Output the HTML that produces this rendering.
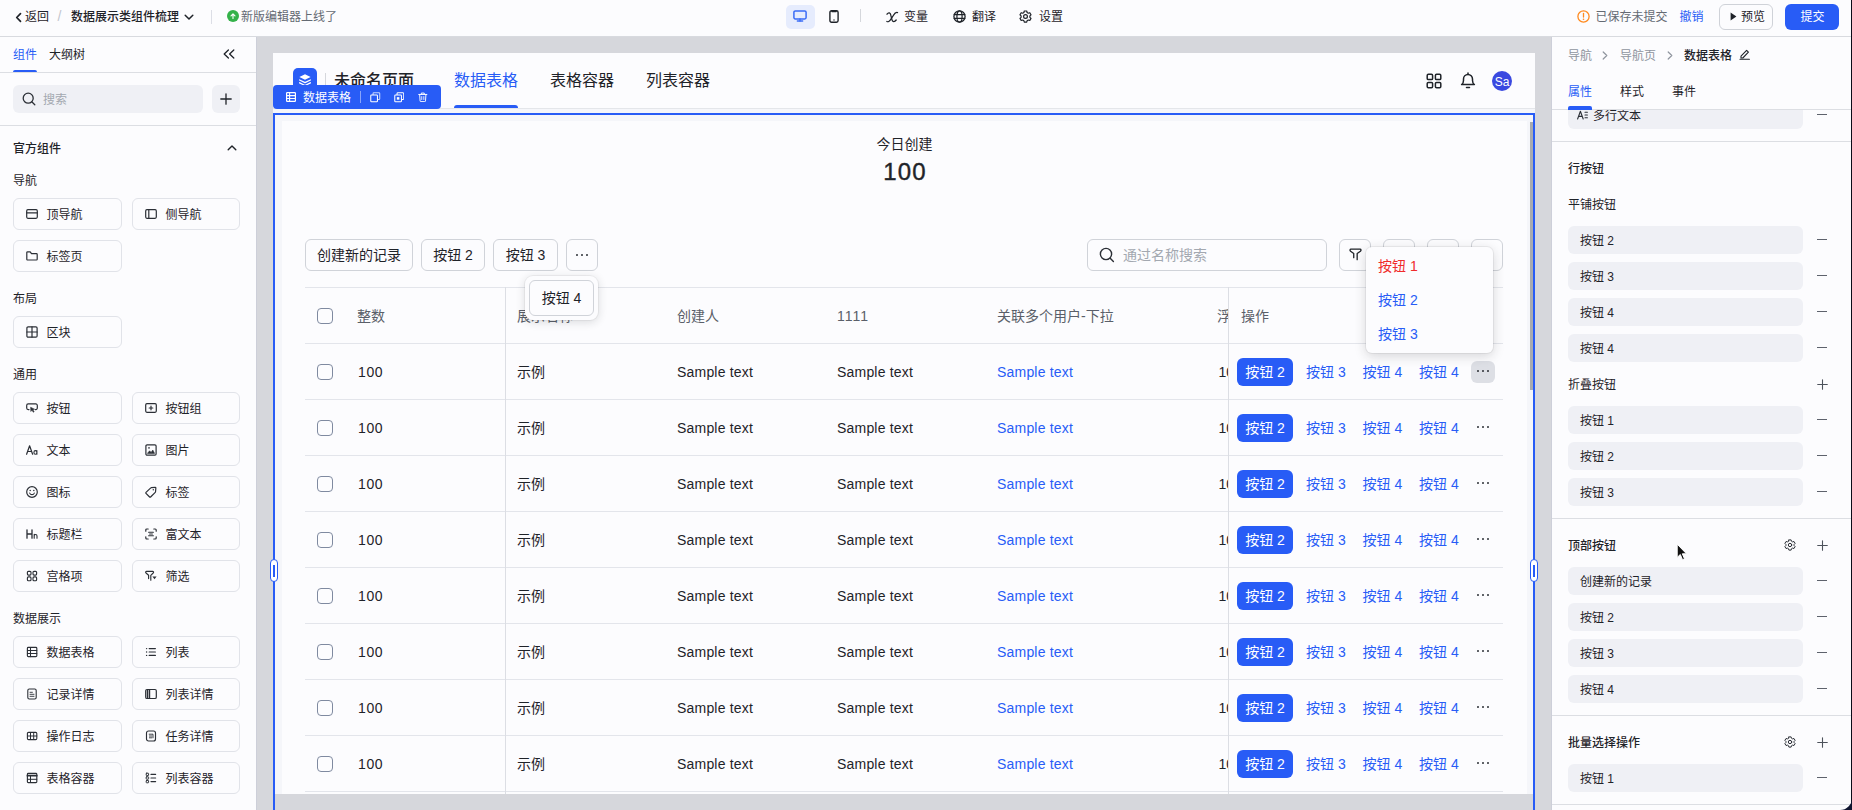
<!DOCTYPE html>
<html lang="zh-CN"><head><meta charset="utf-8"><title>数据展示类组件梳理</title>
<style>
html,body{margin:0;padding:0;}
body{width:1852px;height:810px;position:relative;overflow:hidden;background:#fcfcfe;
 font-family:"Liberation Sans","Noto Sans CJK SC",sans-serif;}
.r{position:absolute;box-sizing:border-box;display:block;}
.t{position:absolute;white-space:nowrap;display:block;}
</style></head><body>

<main>
<div class="r" style="left:256px;top:37px;width:1296px;height:773px;background:#d6d7dc;"></div>
<div class="r" style="left:273px;top:53px;width:1262px;height:741px;background:#f5f6fa;"></div>
<div class="r" style="left:273px;top:53px;width:1262px;height:56px;background:#fcfcfe;"></div>
<div class="r" style="left:273px;top:108px;width:1262px;height:1px;background:#e4e6ea;"></div>
<div class="r" style="left:281.5px;top:121px;width:1245.5px;height:673px;background:#fcfcfe;"></div>
<div class="r" style="left:293px;top:68px;width:24px;height:24px;background:#285cf6;border-radius:5px;"></div>
<svg class="r" style="left:298px;top:73px;" width="14" height="14" viewBox="0 0 14 14" fill="none"><path d="M7 1.2L12.6 4 7 6.8 1.4 4z" fill="#fff"/><path d="M1.6 7l5.4 2.7L12.4 7M1.6 9.8l5.4 2.7 5.4-2.7" stroke="#fff" stroke-width="1.3" stroke-linecap="round" stroke-linejoin="round"/></svg>
<div class="r" style="left:325px;top:73px;width:1px;height:14px;background:#d5d7dc;"></div>
<span class="t" style="left:334px;top:69.0px;font-size:16px;line-height:24px;height:24px;color:#1f2329;font-weight:500;">未命名页面</span>
<span class="t" style="left:454px;top:69.0px;font-size:16px;line-height:24px;height:24px;color:#285cf6;">数据表格</span>
<span class="t" style="left:550px;top:69.0px;font-size:16px;line-height:24px;height:24px;color:#1f2329;">表格容器</span>
<span class="t" style="left:646px;top:69.0px;font-size:16px;line-height:24px;height:24px;color:#1f2329;">列表容器</span>
<div class="r" style="left:454px;top:105px;width:64px;height:3px;background:#285cf6;border-radius:3px 3px 0 0;"></div>
<svg class="r" style="left:1426px;top:73px;" width="16" height="16" viewBox="0 0 16 16" fill="none"><rect x="1.2" y="1.2" width="5.4" height="5.4" rx="1.2" stroke="#1f2329" stroke-width="1.5" stroke-linecap="round" stroke-linejoin="round"/><rect x="9.4" y="1.2" width="5.4" height="5.4" rx="1.2" stroke="#1f2329" stroke-width="1.5" stroke-linecap="round" stroke-linejoin="round"/><rect x="1.2" y="9.4" width="5.4" height="5.4" rx="1.2" stroke="#1f2329" stroke-width="1.5" stroke-linecap="round" stroke-linejoin="round"/><rect x="9.4" y="9.4" width="5.4" height="5.4" rx="1.2" stroke="#1f2329" stroke-width="1.5" stroke-linecap="round" stroke-linejoin="round"/></svg>
<svg class="r" style="left:1460px;top:71.5px;" width="16" height="17" viewBox="0 0 16 17" fill="none"><path d="M1.6 12.6h12.8c-1.3-1-1.9-2.3-1.9-4.2V6.9a4.5 4.5 0 0 0-9 0v1.5c0 1.9-.6 3.2-1.9 4.2z" stroke="#1f2329" stroke-width="1.5" stroke-linecap="round" stroke-linejoin="round"/><path d="M8 1.1v1.2" stroke="#1f2329" stroke-width="1.5" stroke-linecap="round" stroke-linejoin="round"/><path d="M6.5 15.4h3" stroke="#1f2329" stroke-width="1.5" stroke-linecap="round" stroke-linejoin="round"/></svg>
<div class="r" style="left:1492px;top:71px;width:20px;height:20px;background:#3a49e0;border-radius:10px;"></div>
<span class="t" style="left:1502px;top:72.0px;font-size:12px;line-height:20px;height:20px;color:#fff;transform:translateX(-50%);">Sa</span>
<span class="t" style="left:904.5px;top:133.0px;font-size:14px;line-height:22px;height:22px;color:#1f2329;transform:translateX(-50%);">今日创建</span>
<span class="t" style="left:905px;top:157.0px;font-size:24px;line-height:30px;height:30px;color:#1f2329;transform:translateX(-50%);letter-spacing:1.2px;-webkit-text-stroke:0.4px #1f2329;">100</span>
<div class="r" style="left:305px;top:239px;width:108px;height:32px;background:#fcfcfe;border:1px solid #d0d3d9;border-radius:6px;"></div>
<span class="t" style="left:359.0px;top:244.0px;font-size:14px;line-height:22px;height:22px;color:#1f2329;transform:translateX(-50%);">创建新的记录</span>
<div class="r" style="left:421px;top:239px;width:64px;height:32px;background:#fcfcfe;border:1px solid #d0d3d9;border-radius:6px;"></div>
<span class="t" style="left:453.0px;top:244.0px;font-size:14px;line-height:22px;height:22px;color:#1f2329;transform:translateX(-50%);">按钮 2</span>
<div class="r" style="left:493px;top:239px;width:65px;height:32px;background:#fcfcfe;border:1px solid #d0d3d9;border-radius:6px;"></div>
<span class="t" style="left:525.5px;top:244.0px;font-size:14px;line-height:22px;height:22px;color:#1f2329;transform:translateX(-50%);">按钮 3</span>
<div class="r" style="left:566px;top:239px;width:32px;height:32px;background:#fcfcfe;border:1px solid #d0d3d9;border-radius:6px;"></div>
<svg class="r" style="left:575px;top:253px;" width="14" height="4" viewBox="0 0 14 4" fill="none"><circle cx="2" cy="2" r="0.95" fill="#1f2329"/><circle cx="7" cy="2" r="0.95" fill="#1f2329"/><circle cx="12" cy="2" r="0.95" fill="#1f2329"/></svg>
<div class="r" style="left:1087px;top:239px;width:240px;height:32px;background:#fcfcfe;border:1px solid #d0d3d9;border-radius:6px;"></div>
<svg class="r" style="left:1099px;top:247px;" width="16" height="16" viewBox="0 0 16 16" fill="none"><circle cx="7" cy="7" r="5.6" stroke="#2b2f36" stroke-width="1.4" stroke-linecap="round" stroke-linejoin="round"/><path d="M11.2 11.2l3.2 3.2" stroke="#2b2f36" stroke-width="1.4" stroke-linecap="round" stroke-linejoin="round"/></svg>
<span class="t" style="left:1123px;top:244.0px;font-size:14px;line-height:22px;height:22px;color:#a3a8b0;">通过名称搜索</span>
<div class="r" style="left:1339px;top:239px;width:32px;height:32px;background:#fcfcfe;border:1px solid #d0d3d9;border-radius:6px;"></div>
<div class="r" style="left:1383px;top:239px;width:32px;height:32px;background:#fcfcfe;border:1px solid #d0d3d9;border-radius:6px;"></div>
<div class="r" style="left:1427px;top:239px;width:32px;height:32px;background:#fcfcfe;border:1px solid #d0d3d9;border-radius:6px;"></div>
<div class="r" style="left:1471px;top:239px;width:32px;height:32px;background:#fcfcfe;border:1px solid #d0d3d9;border-radius:6px;"></div>
<svg class="r" style="left:1348.6px;top:248.4px;" width="13" height="13" viewBox="0 0 14 14" fill="none"><path d="M5.1 10.4V6L1.7 3.5Q1 2.9 1.1 2.1Q1.3 1.3 2.1 1.3H11.9Q12.8 1.3 12.9 2.1Q13 2.9 12.3 3.5L8.8 6V12.6" stroke="#1f2329" stroke-width="1.4" stroke-linecap="round" stroke-linejoin="round"/></svg>
<div class="r" style="left:305px;top:287px;width:1198px;height:1px;background:#e3e5eb;"></div>
<div class="r" style="left:305px;top:343px;width:1198px;height:1px;background:#e3e5eb;"></div>
<div class="r" style="left:305px;top:399px;width:1198px;height:1px;background:#e3e5eb;"></div>
<div class="r" style="left:305px;top:455px;width:1198px;height:1px;background:#e3e5eb;"></div>
<div class="r" style="left:305px;top:511px;width:1198px;height:1px;background:#e3e5eb;"></div>
<div class="r" style="left:305px;top:567px;width:1198px;height:1px;background:#e3e5eb;"></div>
<div class="r" style="left:305px;top:623px;width:1198px;height:1px;background:#e3e5eb;"></div>
<div class="r" style="left:305px;top:679px;width:1198px;height:1px;background:#e3e5eb;"></div>
<div class="r" style="left:305px;top:735px;width:1198px;height:1px;background:#e3e5eb;"></div>
<div class="r" style="left:305px;top:791px;width:1198px;height:1px;background:#e3e5eb;"></div>
<div class="r" style="left:505px;top:287px;width:1px;height:507px;background:#dcdee4;"></div>
<div class="r" style="left:1228px;top:287px;width:1px;height:507px;background:#dcdee4;"></div>
<div class="r" style="left:317px;top:307.5px;width:16px;height:16px;background:#fcfcfe;border:1px solid #7f8aa0;border-radius:4px;"></div>
<span class="t" style="left:357px;top:304.5px;font-size:14px;line-height:22px;height:22px;color:#5a5f69;">整数</span>
<span class="t" style="left:517px;top:304.5px;font-size:14px;line-height:22px;height:22px;color:#5a5f69;">展示名称</span>
<span class="t" style="left:677px;top:304.5px;font-size:14px;line-height:22px;height:22px;color:#5a5f69;">创建人</span>
<span class="t" style="left:837px;top:304.5px;font-size:14px;line-height:22px;height:22px;color:#5a5f69;letter-spacing:1px;">1111</span>
<span class="t" style="left:997px;top:304.5px;font-size:14px;line-height:22px;height:22px;color:#5a5f69;">关联多个用户-下拉</span>
<span class="t" style="left:1241px;top:304.5px;font-size:14px;line-height:22px;height:22px;color:#5a5f69;">操作</span>
<div class="r" style="left:1217px;top:288px;width:11px;height:506px;overflow:hidden;">
<span class="t" style="left:0px;top:16.5px;font-size:14px;line-height:22px;height:22px;color:#5a5f69;">浮点数</span>
<span class="t" style="left:1.5px;top:72.5px;font-size:14px;line-height:22px;height:22px;color:#1f2329;">100.00</span>
<span class="t" style="left:1.5px;top:128.5px;font-size:14px;line-height:22px;height:22px;color:#1f2329;">100.00</span>
<span class="t" style="left:1.5px;top:184.5px;font-size:14px;line-height:22px;height:22px;color:#1f2329;">100.00</span>
<span class="t" style="left:1.5px;top:240.5px;font-size:14px;line-height:22px;height:22px;color:#1f2329;">100.00</span>
<span class="t" style="left:1.5px;top:296.5px;font-size:14px;line-height:22px;height:22px;color:#1f2329;">100.00</span>
<span class="t" style="left:1.5px;top:352.5px;font-size:14px;line-height:22px;height:22px;color:#1f2329;">100.00</span>
<span class="t" style="left:1.5px;top:408.5px;font-size:14px;line-height:22px;height:22px;color:#1f2329;">100.00</span>
<span class="t" style="left:1.5px;top:464.5px;font-size:14px;line-height:22px;height:22px;color:#1f2329;">100.00</span>
<span class="t" style="left:1.5px;top:520.5px;font-size:14px;line-height:22px;height:22px;color:#1f2329;">100.00</span>
</div>
<div class="r" style="left:317px;top:363.5px;width:16px;height:16px;background:#fcfcfe;border:1px solid #7f8aa0;border-radius:4px;"></div>
<span class="t" style="left:358px;top:360.5px;font-size:14px;line-height:22px;height:22px;color:#1f2329;letter-spacing:0.6px;">100</span>
<span class="t" style="left:517px;top:360.5px;font-size:14px;line-height:22px;height:22px;color:#1f2329;">示例</span>
<span class="t" style="left:677px;top:360.5px;font-size:14px;line-height:22px;height:22px;color:#1f2329;letter-spacing:.2px;">Sample text</span>
<span class="t" style="left:837px;top:360.5px;font-size:14px;line-height:22px;height:22px;color:#1f2329;letter-spacing:.2px;">Sample text</span>
<span class="t" style="left:997px;top:360.5px;font-size:14px;line-height:22px;height:22px;color:#285cf6;letter-spacing:.2px;">Sample text</span>
<div class="r" style="left:1237px;top:357.5px;width:56px;height:28px;background:#285cf6;border-radius:6px;"></div>
<span class="t" style="left:1265px;top:360.5px;font-size:14px;line-height:22px;height:22px;color:#fff;transform:translateX(-50%);">按钮 2</span>
<span class="t" style="left:1306px;top:360.5px;font-size:14px;line-height:22px;height:22px;color:#285cf6;">按钮 3</span>
<span class="t" style="left:1362.5px;top:360.5px;font-size:14px;line-height:22px;height:22px;color:#285cf6;">按钮 4</span>
<span class="t" style="left:1419px;top:360.5px;font-size:14px;line-height:22px;height:22px;color:#285cf6;">按钮 4</span>
<div class="r" style="left:1471px;top:361px;width:24px;height:22px;background:#dddfe5;border-radius:6px;"></div>
<svg class="r" style="left:1476px;top:369.0px;" width="14" height="4" viewBox="0 0 14 4" fill="none"><circle cx="2" cy="2" r="0.95" fill="#1f2329"/><circle cx="7" cy="2" r="0.95" fill="#1f2329"/><circle cx="12" cy="2" r="0.95" fill="#1f2329"/></svg>
<div class="r" style="left:317px;top:419.5px;width:16px;height:16px;background:#fcfcfe;border:1px solid #7f8aa0;border-radius:4px;"></div>
<span class="t" style="left:358px;top:416.5px;font-size:14px;line-height:22px;height:22px;color:#1f2329;letter-spacing:0.6px;">100</span>
<span class="t" style="left:517px;top:416.5px;font-size:14px;line-height:22px;height:22px;color:#1f2329;">示例</span>
<span class="t" style="left:677px;top:416.5px;font-size:14px;line-height:22px;height:22px;color:#1f2329;letter-spacing:.2px;">Sample text</span>
<span class="t" style="left:837px;top:416.5px;font-size:14px;line-height:22px;height:22px;color:#1f2329;letter-spacing:.2px;">Sample text</span>
<span class="t" style="left:997px;top:416.5px;font-size:14px;line-height:22px;height:22px;color:#285cf6;letter-spacing:.2px;">Sample text</span>
<div class="r" style="left:1237px;top:413.5px;width:56px;height:28px;background:#285cf6;border-radius:6px;"></div>
<span class="t" style="left:1265px;top:416.5px;font-size:14px;line-height:22px;height:22px;color:#fff;transform:translateX(-50%);">按钮 2</span>
<span class="t" style="left:1306px;top:416.5px;font-size:14px;line-height:22px;height:22px;color:#285cf6;">按钮 3</span>
<span class="t" style="left:1362.5px;top:416.5px;font-size:14px;line-height:22px;height:22px;color:#285cf6;">按钮 4</span>
<span class="t" style="left:1419px;top:416.5px;font-size:14px;line-height:22px;height:22px;color:#285cf6;">按钮 4</span>
<svg class="r" style="left:1476px;top:425.0px;" width="14" height="4" viewBox="0 0 14 4" fill="none"><circle cx="2" cy="2" r="0.95" fill="#1f2329"/><circle cx="7" cy="2" r="0.95" fill="#1f2329"/><circle cx="12" cy="2" r="0.95" fill="#1f2329"/></svg>
<div class="r" style="left:317px;top:475.5px;width:16px;height:16px;background:#fcfcfe;border:1px solid #7f8aa0;border-radius:4px;"></div>
<span class="t" style="left:358px;top:472.5px;font-size:14px;line-height:22px;height:22px;color:#1f2329;letter-spacing:0.6px;">100</span>
<span class="t" style="left:517px;top:472.5px;font-size:14px;line-height:22px;height:22px;color:#1f2329;">示例</span>
<span class="t" style="left:677px;top:472.5px;font-size:14px;line-height:22px;height:22px;color:#1f2329;letter-spacing:.2px;">Sample text</span>
<span class="t" style="left:837px;top:472.5px;font-size:14px;line-height:22px;height:22px;color:#1f2329;letter-spacing:.2px;">Sample text</span>
<span class="t" style="left:997px;top:472.5px;font-size:14px;line-height:22px;height:22px;color:#285cf6;letter-spacing:.2px;">Sample text</span>
<div class="r" style="left:1237px;top:469.5px;width:56px;height:28px;background:#285cf6;border-radius:6px;"></div>
<span class="t" style="left:1265px;top:472.5px;font-size:14px;line-height:22px;height:22px;color:#fff;transform:translateX(-50%);">按钮 2</span>
<span class="t" style="left:1306px;top:472.5px;font-size:14px;line-height:22px;height:22px;color:#285cf6;">按钮 3</span>
<span class="t" style="left:1362.5px;top:472.5px;font-size:14px;line-height:22px;height:22px;color:#285cf6;">按钮 4</span>
<span class="t" style="left:1419px;top:472.5px;font-size:14px;line-height:22px;height:22px;color:#285cf6;">按钮 4</span>
<svg class="r" style="left:1476px;top:481.0px;" width="14" height="4" viewBox="0 0 14 4" fill="none"><circle cx="2" cy="2" r="0.95" fill="#1f2329"/><circle cx="7" cy="2" r="0.95" fill="#1f2329"/><circle cx="12" cy="2" r="0.95" fill="#1f2329"/></svg>
<div class="r" style="left:317px;top:531.5px;width:16px;height:16px;background:#fcfcfe;border:1px solid #7f8aa0;border-radius:4px;"></div>
<span class="t" style="left:358px;top:528.5px;font-size:14px;line-height:22px;height:22px;color:#1f2329;letter-spacing:0.6px;">100</span>
<span class="t" style="left:517px;top:528.5px;font-size:14px;line-height:22px;height:22px;color:#1f2329;">示例</span>
<span class="t" style="left:677px;top:528.5px;font-size:14px;line-height:22px;height:22px;color:#1f2329;letter-spacing:.2px;">Sample text</span>
<span class="t" style="left:837px;top:528.5px;font-size:14px;line-height:22px;height:22px;color:#1f2329;letter-spacing:.2px;">Sample text</span>
<span class="t" style="left:997px;top:528.5px;font-size:14px;line-height:22px;height:22px;color:#285cf6;letter-spacing:.2px;">Sample text</span>
<div class="r" style="left:1237px;top:525.5px;width:56px;height:28px;background:#285cf6;border-radius:6px;"></div>
<span class="t" style="left:1265px;top:528.5px;font-size:14px;line-height:22px;height:22px;color:#fff;transform:translateX(-50%);">按钮 2</span>
<span class="t" style="left:1306px;top:528.5px;font-size:14px;line-height:22px;height:22px;color:#285cf6;">按钮 3</span>
<span class="t" style="left:1362.5px;top:528.5px;font-size:14px;line-height:22px;height:22px;color:#285cf6;">按钮 4</span>
<span class="t" style="left:1419px;top:528.5px;font-size:14px;line-height:22px;height:22px;color:#285cf6;">按钮 4</span>
<svg class="r" style="left:1476px;top:537.0px;" width="14" height="4" viewBox="0 0 14 4" fill="none"><circle cx="2" cy="2" r="0.95" fill="#1f2329"/><circle cx="7" cy="2" r="0.95" fill="#1f2329"/><circle cx="12" cy="2" r="0.95" fill="#1f2329"/></svg>
<div class="r" style="left:317px;top:587.5px;width:16px;height:16px;background:#fcfcfe;border:1px solid #7f8aa0;border-radius:4px;"></div>
<span class="t" style="left:358px;top:584.5px;font-size:14px;line-height:22px;height:22px;color:#1f2329;letter-spacing:0.6px;">100</span>
<span class="t" style="left:517px;top:584.5px;font-size:14px;line-height:22px;height:22px;color:#1f2329;">示例</span>
<span class="t" style="left:677px;top:584.5px;font-size:14px;line-height:22px;height:22px;color:#1f2329;letter-spacing:.2px;">Sample text</span>
<span class="t" style="left:837px;top:584.5px;font-size:14px;line-height:22px;height:22px;color:#1f2329;letter-spacing:.2px;">Sample text</span>
<span class="t" style="left:997px;top:584.5px;font-size:14px;line-height:22px;height:22px;color:#285cf6;letter-spacing:.2px;">Sample text</span>
<div class="r" style="left:1237px;top:581.5px;width:56px;height:28px;background:#285cf6;border-radius:6px;"></div>
<span class="t" style="left:1265px;top:584.5px;font-size:14px;line-height:22px;height:22px;color:#fff;transform:translateX(-50%);">按钮 2</span>
<span class="t" style="left:1306px;top:584.5px;font-size:14px;line-height:22px;height:22px;color:#285cf6;">按钮 3</span>
<span class="t" style="left:1362.5px;top:584.5px;font-size:14px;line-height:22px;height:22px;color:#285cf6;">按钮 4</span>
<span class="t" style="left:1419px;top:584.5px;font-size:14px;line-height:22px;height:22px;color:#285cf6;">按钮 4</span>
<svg class="r" style="left:1476px;top:593.0px;" width="14" height="4" viewBox="0 0 14 4" fill="none"><circle cx="2" cy="2" r="0.95" fill="#1f2329"/><circle cx="7" cy="2" r="0.95" fill="#1f2329"/><circle cx="12" cy="2" r="0.95" fill="#1f2329"/></svg>
<div class="r" style="left:317px;top:643.5px;width:16px;height:16px;background:#fcfcfe;border:1px solid #7f8aa0;border-radius:4px;"></div>
<span class="t" style="left:358px;top:640.5px;font-size:14px;line-height:22px;height:22px;color:#1f2329;letter-spacing:0.6px;">100</span>
<span class="t" style="left:517px;top:640.5px;font-size:14px;line-height:22px;height:22px;color:#1f2329;">示例</span>
<span class="t" style="left:677px;top:640.5px;font-size:14px;line-height:22px;height:22px;color:#1f2329;letter-spacing:.2px;">Sample text</span>
<span class="t" style="left:837px;top:640.5px;font-size:14px;line-height:22px;height:22px;color:#1f2329;letter-spacing:.2px;">Sample text</span>
<span class="t" style="left:997px;top:640.5px;font-size:14px;line-height:22px;height:22px;color:#285cf6;letter-spacing:.2px;">Sample text</span>
<div class="r" style="left:1237px;top:637.5px;width:56px;height:28px;background:#285cf6;border-radius:6px;"></div>
<span class="t" style="left:1265px;top:640.5px;font-size:14px;line-height:22px;height:22px;color:#fff;transform:translateX(-50%);">按钮 2</span>
<span class="t" style="left:1306px;top:640.5px;font-size:14px;line-height:22px;height:22px;color:#285cf6;">按钮 3</span>
<span class="t" style="left:1362.5px;top:640.5px;font-size:14px;line-height:22px;height:22px;color:#285cf6;">按钮 4</span>
<span class="t" style="left:1419px;top:640.5px;font-size:14px;line-height:22px;height:22px;color:#285cf6;">按钮 4</span>
<svg class="r" style="left:1476px;top:649.0px;" width="14" height="4" viewBox="0 0 14 4" fill="none"><circle cx="2" cy="2" r="0.95" fill="#1f2329"/><circle cx="7" cy="2" r="0.95" fill="#1f2329"/><circle cx="12" cy="2" r="0.95" fill="#1f2329"/></svg>
<div class="r" style="left:317px;top:699.5px;width:16px;height:16px;background:#fcfcfe;border:1px solid #7f8aa0;border-radius:4px;"></div>
<span class="t" style="left:358px;top:696.5px;font-size:14px;line-height:22px;height:22px;color:#1f2329;letter-spacing:0.6px;">100</span>
<span class="t" style="left:517px;top:696.5px;font-size:14px;line-height:22px;height:22px;color:#1f2329;">示例</span>
<span class="t" style="left:677px;top:696.5px;font-size:14px;line-height:22px;height:22px;color:#1f2329;letter-spacing:.2px;">Sample text</span>
<span class="t" style="left:837px;top:696.5px;font-size:14px;line-height:22px;height:22px;color:#1f2329;letter-spacing:.2px;">Sample text</span>
<span class="t" style="left:997px;top:696.5px;font-size:14px;line-height:22px;height:22px;color:#285cf6;letter-spacing:.2px;">Sample text</span>
<div class="r" style="left:1237px;top:693.5px;width:56px;height:28px;background:#285cf6;border-radius:6px;"></div>
<span class="t" style="left:1265px;top:696.5px;font-size:14px;line-height:22px;height:22px;color:#fff;transform:translateX(-50%);">按钮 2</span>
<span class="t" style="left:1306px;top:696.5px;font-size:14px;line-height:22px;height:22px;color:#285cf6;">按钮 3</span>
<span class="t" style="left:1362.5px;top:696.5px;font-size:14px;line-height:22px;height:22px;color:#285cf6;">按钮 4</span>
<span class="t" style="left:1419px;top:696.5px;font-size:14px;line-height:22px;height:22px;color:#285cf6;">按钮 4</span>
<svg class="r" style="left:1476px;top:705.0px;" width="14" height="4" viewBox="0 0 14 4" fill="none"><circle cx="2" cy="2" r="0.95" fill="#1f2329"/><circle cx="7" cy="2" r="0.95" fill="#1f2329"/><circle cx="12" cy="2" r="0.95" fill="#1f2329"/></svg>
<div class="r" style="left:317px;top:755.5px;width:16px;height:16px;background:#fcfcfe;border:1px solid #7f8aa0;border-radius:4px;"></div>
<span class="t" style="left:358px;top:752.5px;font-size:14px;line-height:22px;height:22px;color:#1f2329;letter-spacing:0.6px;">100</span>
<span class="t" style="left:517px;top:752.5px;font-size:14px;line-height:22px;height:22px;color:#1f2329;">示例</span>
<span class="t" style="left:677px;top:752.5px;font-size:14px;line-height:22px;height:22px;color:#1f2329;letter-spacing:.2px;">Sample text</span>
<span class="t" style="left:837px;top:752.5px;font-size:14px;line-height:22px;height:22px;color:#1f2329;letter-spacing:.2px;">Sample text</span>
<span class="t" style="left:997px;top:752.5px;font-size:14px;line-height:22px;height:22px;color:#285cf6;letter-spacing:.2px;">Sample text</span>
<div class="r" style="left:1237px;top:749.5px;width:56px;height:28px;background:#285cf6;border-radius:6px;"></div>
<span class="t" style="left:1265px;top:752.5px;font-size:14px;line-height:22px;height:22px;color:#fff;transform:translateX(-50%);">按钮 2</span>
<span class="t" style="left:1306px;top:752.5px;font-size:14px;line-height:22px;height:22px;color:#285cf6;">按钮 3</span>
<span class="t" style="left:1362.5px;top:752.5px;font-size:14px;line-height:22px;height:22px;color:#285cf6;">按钮 4</span>
<span class="t" style="left:1419px;top:752.5px;font-size:14px;line-height:22px;height:22px;color:#285cf6;">按钮 4</span>
<svg class="r" style="left:1476px;top:761.0px;" width="14" height="4" viewBox="0 0 14 4" fill="none"><circle cx="2" cy="2" r="0.95" fill="#1f2329"/><circle cx="7" cy="2" r="0.95" fill="#1f2329"/><circle cx="12" cy="2" r="0.95" fill="#1f2329"/></svg>
<div class="r" style="left:256px;top:794px;width:1296px;height:16px;background:#d6d7dc;"></div>
<div class="r" style="left:525px;top:276px;width:73px;height:44px;background:#fcfcfe;border-radius:8px;box-shadow:0 2px 10px rgba(31,35,41,.16),0 0 0 1px rgba(31,35,41,.05);"></div>
<div class="r" style="left:529px;top:280px;width:65px;height:36px;background:#fcfcfe;border:1px solid #d0d3d9;border-radius:6px;"></div>
<span class="t" style="left:561.5px;top:287.0px;font-size:14px;line-height:22px;height:22px;color:#1f2329;transform:translateX(-50%);">按钮 4</span>
<div class="r" style="left:1366px;top:247px;width:127px;height:106px;background:#fcfcfe;border-radius:6px;box-shadow:0 3px 12px rgba(31,35,41,.18),0 0 0 1px rgba(31,35,41,.06);"></div>
<span class="t" style="left:1378px;top:255.0px;font-size:14px;line-height:22px;height:22px;color:#f02b2b;">按钮 1</span>
<span class="t" style="left:1378px;top:289.0px;font-size:14px;line-height:22px;height:22px;color:#285cf6;">按钮 2</span>
<span class="t" style="left:1378px;top:323.0px;font-size:14px;line-height:22px;height:22px;color:#285cf6;">按钮 3</span>
<div class="r" style="left:1530px;top:122px;width:3px;height:268px;background:#a9abb0;"></div>
<div class="r" style="left:273px;top:113px;width:1262px;height:720px;border:2px solid #285cf6;"></div>
<div class="r" style="left:273px;top:85px;width:168px;height:24px;background:#285cf6;border-radius:4px;"></div>
<svg class="r" style="left:285.5px;top:92px;" width="10" height="10" viewBox="0 0 10 10" fill="none"><rect x="0.6" y="0.6" width="8.8" height="8.8" rx="0.6" stroke="#fff" stroke-width="1.2"/><path d="M0.6 3.6H9.4M0.6 6.5H9.4M3.6 0.6V9.4" stroke="#fff" stroke-width="1.1"/></svg>
<span class="t" style="left:303px;top:88.0px;font-size:12px;line-height:20px;height:20px;color:#fff;">数据表格</span>
<div class="r" style="left:360px;top:91px;width:1px;height:12px;background:rgba(255,255,255,.45);"></div>
<svg class="r" style="left:370px;top:92px;" width="10.5" height="10.5" viewBox="0 0 11 11" fill="none"><path d="M3.2 3.2V1.6a0.8 0.8 0 0 1 .8-.8h5.4a0.8 0.8 0 0 1 .8.8V7a0.8 0.8 0 0 1-.8.8H7.8" stroke="#fff" stroke-width="1.1" opacity=".75"/><rect x="0.8" y="3.2" width="7" height="7" rx="0.8" stroke="#fff" stroke-width="1.1"/></svg>
<svg class="r" style="left:393.5px;top:92px;" width="10.5" height="10.5" viewBox="0 0 11 11" fill="none"><path d="M3.2 3.2V1.6a0.8 0.8 0 0 1 .8-.8h5.4a0.8 0.8 0 0 1 .8.8V7a0.8 0.8 0 0 1-.8.8H7.8" stroke="#fff" stroke-width="1.1"/><rect x="0.8" y="3.2" width="7" height="7" rx="0.8" stroke="#fff" stroke-width="1.1"/><rect x="3" y="5.4" width="2.6" height="2.6" fill="#fff"/></svg>
<svg class="r" style="left:418px;top:91.5px;" width="9.6" height="10.5" viewBox="0 0 11 12" fill="none"><path d="M0.8 2.8h9.4M3.8 2.6V1.2h3.4v1.4M1.9 2.8l.5 7.4a0.8 0.8 0 0 0 .8.8h4.6a0.8 0.8 0 0 0 .8-.8l.5-7.4" stroke="#fff" stroke-width="1.1" stroke-linecap="round" stroke-linejoin="round"/><path d="M4.3 5.2v3.4M6.7 5.2v3.4" stroke="#fff" stroke-width="1" stroke-linecap="round"/></svg>
<div class="r" style="left:270px;top:559px;width:8px;height:23px;background:#fff;border:1px solid #285cf6;border-radius:4px;"></div>
<div class="r" style="left:273.25px;top:565px;width:1.5px;height:12px;background:#285cf6;"></div>
<div class="r" style="left:1530px;top:559px;width:8px;height:23px;background:#fff;border:1px solid #285cf6;border-radius:4px;"></div>
<div class="r" style="left:1533.25px;top:565px;width:1.5px;height:12px;background:#285cf6;"></div>
</main>
<header>
<div class="r" style="left:0px;top:0px;width:1852px;height:36px;background:#fcfcfe;"></div>
<div class="r" style="left:0px;top:36px;width:1852px;height:1px;background:#d8dadf;"></div>
<svg class="r" style="left:15px;top:11.5px;" width="7" height="11" viewBox="0 0 7 11" fill="none"><path d="M5.5 1.6L1.7 5.5l3.8 3.9" stroke="#1f2329" stroke-width="1.7" stroke-linecap="round" stroke-linejoin="round"/></svg>
<span class="t" style="left:25px;top:7.0px;font-size:12px;line-height:20px;height:20px;color:#1f2329;">返回</span>
<span class="t" style="left:57.5px;top:4.5px;font-size:14px;line-height:22px;height:22px;color:#c3c6ce;">/</span>
<span class="t" style="left:71px;top:7.0px;font-size:12px;line-height:20px;height:20px;color:#1f2329;font-weight:500;">数据展示类组件梳理</span>
<svg class="r" style="left:184px;top:14px;" width="10" height="7" viewBox="0 0 10 7" fill="none"><path d="M1.2 1.2L5 5l3.8-3.8" stroke="#1f2329" stroke-width="1.5" stroke-linecap="round" stroke-linejoin="round"/></svg>
<div class="r" style="left:211px;top:10px;width:1px;height:14px;background:#dcdee6;"></div>
<div class="r" style="left:227px;top:10px;width:12px;height:12px;background:#34b24a;border-radius:6px;"></div>
<svg class="r" style="left:230px;top:13px;" width="6" height="6" viewBox="0 0 6 6" fill="none"><path d="M3 5.4V1M1 2.8L3 0.8l2 2" stroke="#fff" stroke-width="1.1" stroke-linecap="round" stroke-linejoin="round"/></svg>
<span class="t" style="left:241px;top:7.0px;font-size:12px;line-height:20px;height:20px;color:#646a73;">新版编辑器上线了</span>
<div class="r" style="left:786px;top:4.5px;width:29px;height:24px;background:#e6ecfd;border-radius:5px;"></div>
<svg class="r" style="left:793px;top:10px;" width="14" height="12" viewBox="0 0 14 12" fill="none"><rect x="0.9" y="0.9" width="12.2" height="8" rx="1.4" stroke="#3b6cf6" stroke-width="1.5" stroke-linecap="round" stroke-linejoin="round"/><path d="M4.4 11.1h5.2" stroke="#3b6cf6" stroke-width="1.5" stroke-linecap="round" stroke-linejoin="round"/><path d="M7 9v2" stroke="#3b6cf6" stroke-width="1.3" stroke-linecap="round" stroke-linejoin="round"/></svg>
<svg class="r" style="left:829px;top:9.5px;" width="10" height="13" viewBox="0 0 10 13" fill="none"><rect x="0.9" y="0.8" width="8.2" height="11.4" rx="1.6" stroke="#1f2329" stroke-width="1.4" stroke-linecap="round" stroke-linejoin="round"/><path d="M3 1.4h4" stroke="#1f2329" stroke-width="1.6" stroke-linecap="round" stroke-linejoin="round"/><circle cx="5" cy="10" r="0.7" fill="#1f2329"/></svg>
<div class="r" style="left:860px;top:9px;width:1px;height:13px;background:#d5d7dc;"></div>
<svg class="r" style="left:886px;top:10.5px;" width="13" height="12" viewBox="0 0 13 12" fill="none"><path d="M1 3.2C2.6 1 4.4 1.6 4.8 4.2L5.9 8.6C6.4 11 8.6 11.2 10.2 9" stroke="#1f2329" stroke-width="1.3" stroke-linecap="round" stroke-linejoin="round"/><path d="M11.6 1.6C10.2 1 9 1.6 7.4 4.4L4.6 8.6C3.4 10.6 2 11.2 0.9 10.4" stroke="#1f2329" stroke-width="1.2" stroke-linecap="round" stroke-linejoin="round"/></svg>
<span class="t" style="left:904px;top:7.0px;font-size:12px;line-height:20px;height:20px;color:#1f2329;">变量</span>
<svg class="r" style="left:952.5px;top:10px;" width="13" height="13" viewBox="0 0 13 13" fill="none"><circle cx="6.5" cy="6.5" r="5.6" stroke="#1f2329" stroke-width="1.3" stroke-linecap="round" stroke-linejoin="round"/><ellipse cx="6.5" cy="6.5" rx="2.6" ry="5.6" stroke="#1f2329" stroke-width="1.2" stroke-linecap="round" stroke-linejoin="round"/><path d="M1.2 4.6h10.6M1.2 8.4h10.6" stroke="#1f2329" stroke-width="1.2" stroke-linecap="round" stroke-linejoin="round"/></svg>
<span class="t" style="left:972px;top:7.0px;font-size:12px;line-height:20px;height:20px;color:#1f2329;">翻译</span>
<svg class="r" style="left:1019px;top:9.5px;" width="13" height="13" viewBox="0 0 13 13" fill="none"><path d="M5.3 1h2.4l.4 1.5 1.2.7 1.5-.5 1.2 2.1-1.1 1.1v1.4l1.1 1.1-1.2 2.1-1.5-.5-1.2.7-.4 1.5H5.3l-.4-1.5-1.2-.7-1.5.5L1 8.4l1.1-1.1V5.9L1 4.8l1.2-2.1 1.5.5 1.2-.7z" stroke="#1f2329" stroke-width="1.2" stroke-linecap="round" stroke-linejoin="round"/><circle cx="6.5" cy="6.5" r="1.9" stroke="#1f2329" stroke-width="1.2" stroke-linecap="round" stroke-linejoin="round"/></svg>
<span class="t" style="left:1039px;top:7.0px;font-size:12px;line-height:20px;height:20px;color:#1f2329;">设置</span>
<svg class="r" style="left:1576.5px;top:10px;" width="13" height="13" viewBox="0 0 13 13" fill="none"><circle cx="6.5" cy="6.5" r="5.6" stroke="#ff8a1f" stroke-width="1.3"/><path d="M6.5 3.4v3.6" stroke="#ff8a1f" stroke-width="1.3" stroke-linecap="round"/><circle cx="6.5" cy="9.2" r="0.8" fill="#ff8a1f"/></svg>
<span class="t" style="left:1595.5px;top:7.0px;font-size:12px;line-height:20px;height:20px;color:#646a73;">已保存未提交</span>
<span class="t" style="left:1679.5px;top:7.0px;font-size:12px;line-height:20px;height:20px;color:#285cf6;">撤销</span>
<div class="r" style="left:1719px;top:4px;width:54px;height:26px;background:#fcfcfe;border:1px solid #cfd2d8;border-radius:6px;"></div>
<svg class="r" style="left:1730px;top:12px;" width="7" height="9" viewBox="0 0 7 9" fill="none"><path d="M0.6 0.6L6.4 4.5 0.6 8.4z" fill="#1f2329"/></svg>
<span class="t" style="left:1741px;top:7.0px;font-size:12px;line-height:20px;height:20px;color:#1f2329;">预览</span>
<div class="r" style="left:1785px;top:4px;width:54px;height:26px;background:#285cf6;border-radius:6px;"></div>
<span class="t" style="left:1800.5px;top:7.0px;font-size:12px;line-height:20px;height:20px;color:#fff;">提交</span>
</header>
<aside>
<div class="r" style="left:0px;top:37px;width:256px;height:773px;background:#fcfcfe;"></div>
<div class="r" style="left:256px;top:37px;width:1px;height:773px;background:#cdcfd9;"></div>
<span class="t" style="left:13px;top:45.0px;font-size:12px;line-height:20px;height:20px;color:#285cf6;">组件</span>
<span class="t" style="left:49px;top:45.0px;font-size:12px;line-height:20px;height:20px;color:#1f2329;">大纲树</span>
<div class="r" style="left:13px;top:70px;width:24px;height:3px;background:#285cf6;border-radius:2px 2px 0 0;"></div>
<div class="r" style="left:0px;top:72px;width:256px;height:1px;background:#dcdee3;"></div>
<svg class="r" style="left:223px;top:49px;" width="12" height="10" viewBox="0 0 12 10" fill="none"><path d="M5.4 1L1.2 5l4.2 4M10.8 1L6.6 5l4.2 4" stroke="#1f2329" stroke-width="1.3" stroke-linecap="round" stroke-linejoin="round"/></svg>
<div class="r" style="left:13px;top:85px;width:190px;height:28px;background:#eff0f5;border-radius:6px;"></div>
<svg class="r" style="left:22px;top:92px;" width="14" height="14" viewBox="0 0 14 14" fill="none"><circle cx="6.2" cy="6.2" r="5" stroke="#2b2f36" stroke-width="1.3" stroke-linecap="round" stroke-linejoin="round"/><path d="M10 10l2.8 2.8" stroke="#2b2f36" stroke-width="1.3" stroke-linecap="round" stroke-linejoin="round"/></svg>
<span class="t" style="left:43px;top:90.0px;font-size:12px;line-height:20px;height:20px;color:#a3a8b0;">搜索</span>
<div class="r" style="left:212px;top:85px;width:28px;height:28px;background:#eff0f5;border-radius:6px;"></div>
<svg class="r" style="left:220px;top:93px;" width="12" height="12" viewBox="0 0 12 12" fill="none"><path d="M6 0.8v10.4M0.8 6h10.4" stroke="#1f2329" stroke-width="1.3" stroke-linecap="round" stroke-linejoin="round"/></svg>
<div class="r" style="left:0px;top:125px;width:256px;height:1px;background:#dcdee3;"></div>
<span class="t" style="left:13px;top:139.0px;font-size:12px;line-height:20px;height:20px;color:#1f2329;font-weight:500;">官方组件</span>
<svg class="r" style="left:227px;top:144px;" width="10" height="7" viewBox="0 0 10 7" fill="none"><path d="M1.2 5.8L5 2l3.8 3.8" stroke="#1f2329" stroke-width="1.4" stroke-linecap="round" stroke-linejoin="round"/></svg>
<span class="t" style="left:13px;top:170.5px;font-size:12px;line-height:20px;height:20px;color:#1f2329;">导航</span>
<div class="r" style="left:13px;top:198px;width:109px;height:32px;background:#fcfcfe;border:1px solid #e1e3e9;border-radius:6px;"></div>
<svg class="r" style="left:26px;top:208.0px;" width="12" height="12" viewBox="0 0 12 12" fill="none"><rect x="0.7" y="1.7" width="10.6" height="8.6" rx="1.2" stroke="#2b2f36" stroke-width="1.2" stroke-linecap="round" stroke-linejoin="round"/><path d="M0.7 4.8H11.3" stroke="#2b2f36" stroke-width="1.2" stroke-linecap="round" stroke-linejoin="round"/></svg>
<span class="t" style="left:46.5px;top:205.0px;font-size:12px;line-height:20px;height:20px;color:#1f2329;">顶导航</span>
<div class="r" style="left:132px;top:198px;width:108px;height:32px;background:#fcfcfe;border:1px solid #e1e3e9;border-radius:6px;"></div>
<svg class="r" style="left:145px;top:208.0px;" width="12" height="12" viewBox="0 0 12 12" fill="none"><rect x="0.7" y="1.7" width="10.6" height="8.6" rx="1.2" stroke="#2b2f36" stroke-width="1.2" stroke-linecap="round" stroke-linejoin="round"/><path d="M3.8 1.7V10.3" stroke="#2b2f36" stroke-width="1.2" stroke-linecap="round" stroke-linejoin="round"/></svg>
<span class="t" style="left:165.5px;top:205.0px;font-size:12px;line-height:20px;height:20px;color:#1f2329;">侧导航</span>
<div class="r" style="left:13px;top:240px;width:109px;height:32px;background:#fcfcfe;border:1px solid #e1e3e9;border-radius:6px;"></div>
<svg class="r" style="left:26px;top:250.0px;" width="12" height="12" viewBox="0 0 12 12" fill="none"><path d="M0.8 9.2V2.6a0.8 0.8 0 0 1 .8-.8h2.6l1.3 1.8h4.9a0.8 0.8 0 0 1 .8.8v4.8a0.8 0.8 0 0 1-.8.8H1.6a0.8 0.8 0 0 1-.8-.8z" stroke="#2b2f36" stroke-width="1.2" stroke-linecap="round" stroke-linejoin="round"/></svg>
<span class="t" style="left:46.5px;top:247.0px;font-size:12px;line-height:20px;height:20px;color:#1f2329;">标签页</span>
<span class="t" style="left:13px;top:288.5px;font-size:12px;line-height:20px;height:20px;color:#1f2329;">布局</span>
<div class="r" style="left:13px;top:316px;width:109px;height:32px;background:#fcfcfe;border:1px solid #e1e3e9;border-radius:6px;"></div>
<svg class="r" style="left:26px;top:326.0px;" width="12" height="12" viewBox="0 0 12 12" fill="none"><rect x="0.9" y="0.9" width="10.2" height="10.2" rx="1.2" stroke="#2b2f36" stroke-width="1.2" stroke-linecap="round" stroke-linejoin="round"/><path d="M6 0.9V11.1M0.9 6H11.1" stroke="#2b2f36" stroke-width="1.2" stroke-linecap="round" stroke-linejoin="round"/></svg>
<span class="t" style="left:46.5px;top:323.0px;font-size:12px;line-height:20px;height:20px;color:#1f2329;">区块</span>
<span class="t" style="left:13px;top:364.5px;font-size:12px;line-height:20px;height:20px;color:#1f2329;">通用</span>
<div class="r" style="left:13px;top:392px;width:109px;height:32px;background:#fcfcfe;border:1px solid #e1e3e9;border-radius:6px;"></div>
<svg class="r" style="left:26px;top:402.0px;" width="12" height="12" viewBox="0 0 12 12" fill="none"><path d="M3 7.6H2.2A1.5 1.5 0 0 1 .7 6.1V3.4a1.5 1.5 0 0 1 1.5-1.5h7.6a1.5 1.5 0 0 1 1.5 1.5v2.7a1.5 1.5 0 0 1-1.5 1.5H9.4" stroke="#2b2f36" stroke-width="1.2" stroke-linecap="round" stroke-linejoin="round"/><path d="M4.6 5.2l4 2-1.7.5 1.3 2-.9.6-1.3-2-1.2 1.2z" fill="#2b2f36" stroke="#2b2f36" stroke-width="0.5" stroke-linejoin="round"/></svg>
<span class="t" style="left:46.5px;top:399.0px;font-size:12px;line-height:20px;height:20px;color:#1f2329;">按钮</span>
<div class="r" style="left:132px;top:392px;width:108px;height:32px;background:#fcfcfe;border:1px solid #e1e3e9;border-radius:6px;"></div>
<svg class="r" style="left:145px;top:402.0px;" width="12" height="12" viewBox="0 0 12 12" fill="none"><rect x="0.7" y="1.7" width="10.6" height="8.6" rx="1.2" stroke="#2b2f36" stroke-width="1.2" stroke-linecap="round" stroke-linejoin="round"/><path d="M6 4.2V7.8M4.2 6H7.8" stroke="#2b2f36" stroke-width="1.2" stroke-linecap="round" stroke-linejoin="round"/></svg>
<span class="t" style="left:165.5px;top:399.0px;font-size:12px;line-height:20px;height:20px;color:#1f2329;">按钮组</span>
<div class="r" style="left:13px;top:434px;width:109px;height:32px;background:#fcfcfe;border:1px solid #e1e3e9;border-radius:6px;"></div>
<svg class="r" style="left:26px;top:444.0px;" width="12" height="12" viewBox="0 0 12 12" fill="none"><path d="M0.6 10.2L3.6 1.8 6.6 10.2M1.6 7.5H5.6" stroke="#2b2f36" stroke-width="1.2" stroke-linecap="round" stroke-linejoin="round"/><path d="M10.9 6.6v3.6M10.9 8.4a1.5 1.8 0 1 1-3 0a1.5 1.8 0 1 1 3 0z" stroke="#2b2f36" stroke-width="1.1" stroke-linecap="round" stroke-linejoin="round"/></svg>
<span class="t" style="left:46.5px;top:441.0px;font-size:12px;line-height:20px;height:20px;color:#1f2329;">文本</span>
<div class="r" style="left:132px;top:434px;width:108px;height:32px;background:#fcfcfe;border:1px solid #e1e3e9;border-radius:6px;"></div>
<svg class="r" style="left:145px;top:444.0px;" width="12" height="12" viewBox="0 0 12 12" fill="none"><rect x="0.9" y="0.9" width="10.2" height="10.2" rx="1.2" stroke="#2b2f36" stroke-width="1.2" stroke-linecap="round" stroke-linejoin="round"/><path d="M2.4 9.4l2.2-2.6 1.5 1.6 1.7-2.4 1.8 3.4z" fill="#2b2f36" stroke="#2b2f36" stroke-width="0.6" stroke-linejoin="round"/><circle cx="4" cy="3.9" r="0.8" fill="#2b2f36"/></svg>
<span class="t" style="left:165.5px;top:441.0px;font-size:12px;line-height:20px;height:20px;color:#1f2329;">图片</span>
<div class="r" style="left:13px;top:476px;width:109px;height:32px;background:#fcfcfe;border:1px solid #e1e3e9;border-radius:6px;"></div>
<svg class="r" style="left:26px;top:486.0px;" width="12" height="12" viewBox="0 0 12 12" fill="none"><circle cx="6" cy="6" r="5.3" stroke="#2b2f36" stroke-width="1.2" stroke-linecap="round" stroke-linejoin="round"/><path d="M3.7 7.1a2.5 2.5 0 0 0 4.6 0" stroke="#2b2f36" stroke-width="1.1" stroke-linecap="round" stroke-linejoin="round"/><circle cx="4.2" cy="4.5" r="0.75" fill="#2b2f36"/><circle cx="7.8" cy="4.5" r="0.75" fill="#2b2f36"/></svg>
<span class="t" style="left:46.5px;top:483.0px;font-size:12px;line-height:20px;height:20px;color:#1f2329;">图标</span>
<div class="r" style="left:132px;top:476px;width:108px;height:32px;background:#fcfcfe;border:1px solid #e1e3e9;border-radius:6px;"></div>
<svg class="r" style="left:145px;top:486.0px;" width="12" height="12" viewBox="0 0 12 12" fill="none"><path d="M6.4 1.6l3.7-.3a0.7 0.7 0 0 1 .75.75l-.3 3.7a1 1 0 0 1-.3.6L5.6 11a0.7 0.7 0 0 1-1 0L1 7.4a0.7 0.7 0 0 1 0-1l4.8-4.5a1 1 0 0 1 .6-.3z" stroke="#2b2f36" stroke-width="1.2" stroke-linecap="round" stroke-linejoin="round" transform="rotate(0 6 6)"/><circle cx="8.3" cy="3.7" r="0.7" fill="#2b2f36"/></svg>
<span class="t" style="left:165.5px;top:483.0px;font-size:12px;line-height:20px;height:20px;color:#1f2329;">标签</span>
<div class="r" style="left:13px;top:518px;width:109px;height:32px;background:#fcfcfe;border:1px solid #e1e3e9;border-radius:6px;"></div>
<svg class="r" style="left:26px;top:528.0px;" width="12" height="12" viewBox="0 0 12 12" fill="none"><path d="M1 1.8v8.4M6 1.8v8.4M1 6H6" stroke="#2b2f36" stroke-width="1.3" stroke-linecap="round" stroke-linejoin="round"/><path d="M8.2 6.2v4M8.2 7.9a1.4 1.4 0 0 1 2.8 0v2.3" stroke="#2b2f36" stroke-width="1.1" stroke-linecap="round" stroke-linejoin="round"/></svg>
<span class="t" style="left:46.5px;top:525.0px;font-size:12px;line-height:20px;height:20px;color:#1f2329;">标题栏</span>
<div class="r" style="left:132px;top:518px;width:108px;height:32px;background:#fcfcfe;border:1px solid #e1e3e9;border-radius:6px;"></div>
<svg class="r" style="left:145px;top:528.0px;" width="12" height="12" viewBox="0 0 12 12" fill="none"><path d="M0.8 3.2V2a1 1 0 0 1 1-1h1.4M8.8 1h1.4a1 1 0 0 1 1 1v1.2M11.2 8.8V10a1 1 0 0 1-1 1H8.8M3.2 11H1.8a1 1 0 0 1-1-1V8.8" stroke="#2b2f36" stroke-width="1.2" stroke-linecap="round" stroke-linejoin="round"/><path d="M3.6 4.3h4.8M3.6 7.7h4.8M4.6 6h2.8" stroke="#2b2f36" stroke-width="1.1" stroke-linecap="round" stroke-linejoin="round"/></svg>
<span class="t" style="left:165.5px;top:525.0px;font-size:12px;line-height:20px;height:20px;color:#1f2329;">富文本</span>
<div class="r" style="left:13px;top:560px;width:109px;height:32px;background:#fcfcfe;border:1px solid #e1e3e9;border-radius:6px;"></div>
<svg class="r" style="left:26px;top:570.0px;" width="12" height="12" viewBox="0 0 12 12" fill="none"><rect x="1.4" y="1.3" width="3.6" height="3.8" rx="1" stroke="#2b2f36" stroke-width="1.15" stroke-linecap="round" stroke-linejoin="round"/><rect x="7" y="1.3" width="3.6" height="3.8" rx="1" stroke="#2b2f36" stroke-width="1.15" stroke-linecap="round" stroke-linejoin="round"/><rect x="1.4" y="6.9" width="3.6" height="3.8" rx="1" stroke="#2b2f36" stroke-width="1.15" stroke-linecap="round" stroke-linejoin="round"/><rect x="7" y="6.9" width="3.6" height="3.8" rx="1" stroke="#2b2f36" stroke-width="1.15" stroke-linecap="round" stroke-linejoin="round"/></svg>
<span class="t" style="left:46.5px;top:567.0px;font-size:12px;line-height:20px;height:20px;color:#1f2329;">宫格项</span>
<div class="r" style="left:132px;top:560px;width:108px;height:32px;background:#fcfcfe;border:1px solid #e1e3e9;border-radius:6px;"></div>
<svg class="r" style="left:145px;top:570.0px;" width="12" height="12" viewBox="0 0 12 12" fill="none"><path d="M3.6 8.6V5.3L1 3Q0.5 2.4 0.7 1.9Q0.9 1.4 1.6 1.4H7.6Q8.3 1.4 8.5 1.9Q8.7 2.4 8.2 3L5.8 5.3V10.2" stroke="#2b2f36" stroke-width="1.15" stroke-linecap="round" stroke-linejoin="round"/><path d="M7.4 6.6h4.2l-2.1 2.6z" fill="#2b2f36"/></svg>
<span class="t" style="left:165.5px;top:567.0px;font-size:12px;line-height:20px;height:20px;color:#1f2329;">筛选</span>
<span class="t" style="left:13px;top:608.5px;font-size:12px;line-height:20px;height:20px;color:#1f2329;">数据展示</span>
<div class="r" style="left:13px;top:636px;width:109px;height:32px;background:#fcfcfe;border:1px solid #e1e3e9;border-radius:6px;"></div>
<svg class="r" style="left:26px;top:646.0px;" width="12" height="12" viewBox="0 0 12 12" fill="none"><rect x="1.4" y="1.4" width="9.4" height="9.2" rx="0.9" stroke="#2b2f36" stroke-width="1.15" stroke-linecap="round" stroke-linejoin="round"/><path d="M1.4 4.5H10.8M1.4 7.5H10.8M4.5 1.4V10.6" stroke="#2b2f36" stroke-width="1.05" stroke-linecap="round" stroke-linejoin="round"/></svg>
<span class="t" style="left:46.5px;top:643.0px;font-size:12px;line-height:20px;height:20px;color:#1f2329;">数据表格</span>
<div class="r" style="left:132px;top:636px;width:108px;height:32px;background:#fcfcfe;border:1px solid #e1e3e9;border-radius:6px;"></div>
<svg class="r" style="left:145px;top:646.0px;" width="12" height="12" viewBox="0 0 12 12" fill="none"><path d="M4.2 2.6h6.2M4.2 6h6.2M4.2 9.4h6.2" stroke="#2b2f36" stroke-width="1.2" stroke-linecap="round" stroke-linejoin="round"/><circle cx="1.6" cy="2.6" r="0.7" fill="#2b2f36"/><circle cx="1.6" cy="6" r="0.7" fill="#2b2f36"/><circle cx="1.6" cy="9.4" r="0.7" fill="#2b2f36"/></svg>
<span class="t" style="left:165.5px;top:643.0px;font-size:12px;line-height:20px;height:20px;color:#1f2329;">列表</span>
<div class="r" style="left:13px;top:678px;width:109px;height:32px;background:#fcfcfe;border:1px solid #e1e3e9;border-radius:6px;"></div>
<svg class="r" style="left:26px;top:688.0px;" width="12" height="12" viewBox="0 0 12 12" fill="none"><rect x="1.8" y="1" width="8.4" height="10" rx="1.5" stroke="#2b2f36" stroke-width="1.1" stroke-linecap="round" stroke-linejoin="round"/><path d="M4 4.3h2.4M4 6.3h4M4 8.3h4" stroke="#2b2f36" stroke-width="0.9" stroke-linecap="round" stroke-linejoin="round"/></svg>
<span class="t" style="left:46.5px;top:685.0px;font-size:12px;line-height:20px;height:20px;color:#1f2329;">记录详情</span>
<div class="r" style="left:132px;top:678px;width:108px;height:32px;background:#fcfcfe;border:1px solid #e1e3e9;border-radius:6px;"></div>
<svg class="r" style="left:145px;top:688.0px;" width="12" height="12" viewBox="0 0 12 12" fill="none"><rect x="0.7" y="1.5" width="10.6" height="9" rx="1.3" stroke="#2b2f36" stroke-width="1.2" stroke-linecap="round" stroke-linejoin="round"/><path d="M4.6 1.5v9" stroke="#2b2f36" stroke-width="1.2" stroke-linecap="round" stroke-linejoin="round"/><path d="M2.6 1.8v8.4" stroke="#2b2f36" stroke-width="1.6" stroke-linecap="round" stroke-linejoin="round"/></svg>
<span class="t" style="left:165.5px;top:685.0px;font-size:12px;line-height:20px;height:20px;color:#1f2329;">列表详情</span>
<div class="r" style="left:13px;top:720px;width:109px;height:32px;background:#fcfcfe;border:1px solid #e1e3e9;border-radius:6px;"></div>
<svg class="r" style="left:26px;top:730.0px;" width="12" height="12" viewBox="0 0 12 12" fill="none"><rect x="1.4" y="2.4" width="9.4" height="7.2" rx="1.2" stroke="#2b2f36" stroke-width="1.1" stroke-linecap="round" stroke-linejoin="round"/><path d="M1.4 6H10.8M4.5 2.4V9.6M7.7 2.4V9.6" stroke="#2b2f36" stroke-width="1.0" stroke-linecap="round" stroke-linejoin="round"/></svg>
<span class="t" style="left:46.5px;top:727.0px;font-size:12px;line-height:20px;height:20px;color:#1f2329;">操作日志</span>
<div class="r" style="left:132px;top:720px;width:108px;height:32px;background:#fcfcfe;border:1px solid #e1e3e9;border-radius:6px;"></div>
<svg class="r" style="left:145px;top:730.0px;" width="12" height="12" viewBox="0 0 12 12" fill="none"><rect x="1.5" y="1" width="9" height="10" rx="2" stroke="#2b2f36" stroke-width="1.15" stroke-linecap="round" stroke-linejoin="round"/><path d="M4.2 4.2h3.8v3.6M4.4 6h2.4M4.4 7.8h2.4" stroke="#2b2f36" stroke-width="0.9" stroke-linecap="round" stroke-linejoin="round"/></svg>
<span class="t" style="left:165.5px;top:727.0px;font-size:12px;line-height:20px;height:20px;color:#1f2329;">任务详情</span>
<div class="r" style="left:13px;top:762px;width:109px;height:32px;background:#fcfcfe;border:1px solid #e1e3e9;border-radius:6px;"></div>
<svg class="r" style="left:26px;top:772.0px;" width="12" height="12" viewBox="0 0 12 12" fill="none"><rect x="1.4" y="1.4" width="9.4" height="9.2" rx="0.9" stroke="#2b2f36" stroke-width="1.15" stroke-linecap="round" stroke-linejoin="round"/><path d="M1.4 3.7H10.8" stroke="#2b2f36" stroke-width="1.7" stroke-linecap="round" stroke-linejoin="round"/><path d="M1.4 7.3H10.8M4.5 3.7V10.6" stroke="#2b2f36" stroke-width="1.0" stroke-linecap="round" stroke-linejoin="round"/></svg>
<span class="t" style="left:46.5px;top:769.0px;font-size:12px;line-height:20px;height:20px;color:#1f2329;">表格容器</span>
<div class="r" style="left:132px;top:762px;width:108px;height:32px;background:#fcfcfe;border:1px solid #e1e3e9;border-radius:6px;"></div>
<svg class="r" style="left:145px;top:772.0px;" width="12" height="12" viewBox="0 0 12 12" fill="none"><rect x="1.2" y="1.2" width="2.4" height="2.4" rx="0.5" stroke="#2b2f36" stroke-width="1.0" stroke-linecap="round" stroke-linejoin="round"/><rect x="1.2" y="4.8" width="2.4" height="2.4" rx="0.5" stroke="#2b2f36" stroke-width="1.0" stroke-linecap="round" stroke-linejoin="round"/><rect x="1.2" y="8.4" width="2.4" height="2.4" rx="0.5" stroke="#2b2f36" stroke-width="1.0" stroke-linecap="round" stroke-linejoin="round"/><path d="M6 2.4h4.6M6 6h4.6M6 9.6h4.6" stroke="#2b2f36" stroke-width="1.2" stroke-linecap="round" stroke-linejoin="round"/></svg>
<span class="t" style="left:165.5px;top:769.0px;font-size:12px;line-height:20px;height:20px;color:#1f2329;">列表容器</span>
</aside>
<aside>
<div class="r" style="left:1551px;top:37px;width:1px;height:773px;background:#cdcfd9;"></div>
<div class="r" style="left:1552px;top:37px;width:300px;height:773px;background:#fcfcfe;"></div>
<div class="r" style="left:1568px;top:101px;width:235px;height:28px;background:#eff0f5;border-radius:6px;"></div>
<span class="t" style="left:1593px;top:106.0px;font-size:12px;line-height:20px;height:20px;color:#1f2329;">多行文本</span>
<svg class="r" style="left:1577px;top:110px;" width="11" height="10" viewBox="0 0 11 10" fill="none"><path d="M0.6 9L3.4 1.2 6.2 9M1.5 6.4h3.8" stroke="#2b2f36" stroke-width="1.1" stroke-linecap="round" stroke-linejoin="round"/><path d="M8 2.2h2.4M8 5h2.4M8 7.8h2.4" stroke="#2b2f36" stroke-width="1.1" stroke-linecap="round" stroke-linejoin="round"/></svg>
<div class="r" style="left:1817px;top:114px;width:10px;height:1.25px;background:#5d626c;"></div>
<div class="r" style="left:1552px;top:141px;width:299px;height:1px;background:#dcdee3;"></div>
<span class="t" style="left:1568px;top:159.0px;font-size:12px;line-height:20px;height:20px;color:#1f2329;font-weight:500;">行按钮</span>
<span class="t" style="left:1568px;top:195.0px;font-size:12px;line-height:20px;height:20px;color:#1f2329;">平铺按钮</span>
<div class="r" style="left:1568px;top:226px;width:235px;height:28px;background:#eff0f5;border-radius:6px;"></div>
<span class="t" style="left:1580px;top:231.0px;font-size:12px;line-height:20px;height:20px;color:#1f2329;">按钮 2</span>
<div class="r" style="left:1817px;top:239px;width:10px;height:1.25px;background:#5d626c;"></div>
<div class="r" style="left:1568px;top:262px;width:235px;height:28px;background:#eff0f5;border-radius:6px;"></div>
<span class="t" style="left:1580px;top:267.0px;font-size:12px;line-height:20px;height:20px;color:#1f2329;">按钮 3</span>
<div class="r" style="left:1817px;top:275px;width:10px;height:1.25px;background:#5d626c;"></div>
<div class="r" style="left:1568px;top:298px;width:235px;height:28px;background:#eff0f5;border-radius:6px;"></div>
<span class="t" style="left:1580px;top:303.0px;font-size:12px;line-height:20px;height:20px;color:#1f2329;">按钮 4</span>
<div class="r" style="left:1817px;top:311px;width:10px;height:1.25px;background:#5d626c;"></div>
<div class="r" style="left:1568px;top:334px;width:235px;height:28px;background:#eff0f5;border-radius:6px;"></div>
<span class="t" style="left:1580px;top:339.0px;font-size:12px;line-height:20px;height:20px;color:#1f2329;">按钮 4</span>
<div class="r" style="left:1817px;top:347px;width:10px;height:1.25px;background:#5d626c;"></div>
<span class="t" style="left:1568px;top:375.0px;font-size:12px;line-height:20px;height:20px;color:#1f2329;">折叠按钮</span>
<svg class="r" style="left:1816.5px;top:378.5px;" width="11" height="11" viewBox="0 0 11 11" fill="none"><path d="M5.5 0.7v9.6M0.7 5.5h9.6" stroke="#4d525b" stroke-width="1.1" stroke-linecap="round" stroke-linejoin="round"/></svg>
<div class="r" style="left:1568px;top:406px;width:235px;height:28px;background:#eff0f5;border-radius:6px;"></div>
<span class="t" style="left:1580px;top:411.0px;font-size:12px;line-height:20px;height:20px;color:#1f2329;">按钮 1</span>
<div class="r" style="left:1817px;top:419px;width:10px;height:1.25px;background:#5d626c;"></div>
<div class="r" style="left:1568px;top:442px;width:235px;height:28px;background:#eff0f5;border-radius:6px;"></div>
<span class="t" style="left:1580px;top:447.0px;font-size:12px;line-height:20px;height:20px;color:#1f2329;">按钮 2</span>
<div class="r" style="left:1817px;top:455px;width:10px;height:1.25px;background:#5d626c;"></div>
<div class="r" style="left:1568px;top:478px;width:235px;height:28px;background:#eff0f5;border-radius:6px;"></div>
<span class="t" style="left:1580px;top:483.0px;font-size:12px;line-height:20px;height:20px;color:#1f2329;">按钮 3</span>
<div class="r" style="left:1817px;top:491px;width:10px;height:1.25px;background:#5d626c;"></div>
<div class="r" style="left:1552px;top:518px;width:299px;height:1px;background:#dcdee3;"></div>
<span class="t" style="left:1568px;top:536.0px;font-size:12px;line-height:20px;height:20px;color:#1f2329;font-weight:500;">顶部按钮</span>
<svg class="r" style="left:1784px;top:539px;" width="12" height="12" viewBox="0 0 12 12" fill="none"><path d="M4.9 0.9h2.2l.4 1.4 1.1.6 1.4-.4 1.1 1.9-1 1v1.2l1 1-1.1 1.9-1.4-.4-1.1.6-.4 1.4H4.9l-.4-1.4-1.1-.6-1.4.4L.9 7.6l1-1V5.4l-1-1L2 2.5l1.4.4 1.1-.6z" stroke="#2b2f36" stroke-width="1.0" stroke-linecap="round" stroke-linejoin="round"/><circle cx="6" cy="6" r="1.7" stroke="#2b2f36" stroke-width="1.0" stroke-linecap="round" stroke-linejoin="round"/></svg>
<svg class="r" style="left:1816.5px;top:539.5px;" width="11" height="11" viewBox="0 0 11 11" fill="none"><path d="M5.5 0.7v9.6M0.7 5.5h9.6" stroke="#4d525b" stroke-width="1.1" stroke-linecap="round" stroke-linejoin="round"/></svg>
<div class="r" style="left:1568px;top:567px;width:235px;height:28px;background:#eff0f5;border-radius:6px;"></div>
<span class="t" style="left:1580px;top:572.0px;font-size:12px;line-height:20px;height:20px;color:#1f2329;">创建新的记录</span>
<div class="r" style="left:1817px;top:580px;width:10px;height:1.25px;background:#5d626c;"></div>
<div class="r" style="left:1568px;top:603px;width:235px;height:28px;background:#eff0f5;border-radius:6px;"></div>
<span class="t" style="left:1580px;top:608.0px;font-size:12px;line-height:20px;height:20px;color:#1f2329;">按钮 2</span>
<div class="r" style="left:1817px;top:616px;width:10px;height:1.25px;background:#5d626c;"></div>
<div class="r" style="left:1568px;top:639px;width:235px;height:28px;background:#eff0f5;border-radius:6px;"></div>
<span class="t" style="left:1580px;top:644.0px;font-size:12px;line-height:20px;height:20px;color:#1f2329;">按钮 3</span>
<div class="r" style="left:1817px;top:652px;width:10px;height:1.25px;background:#5d626c;"></div>
<div class="r" style="left:1568px;top:675px;width:235px;height:28px;background:#eff0f5;border-radius:6px;"></div>
<span class="t" style="left:1580px;top:680.0px;font-size:12px;line-height:20px;height:20px;color:#1f2329;">按钮 4</span>
<div class="r" style="left:1817px;top:688px;width:10px;height:1.25px;background:#5d626c;"></div>
<div class="r" style="left:1552px;top:715px;width:299px;height:1px;background:#dcdee3;"></div>
<span class="t" style="left:1568px;top:733.0px;font-size:12px;line-height:20px;height:20px;color:#1f2329;font-weight:500;">批量选择操作</span>
<svg class="r" style="left:1784px;top:736px;" width="12" height="12" viewBox="0 0 12 12" fill="none"><path d="M4.9 0.9h2.2l.4 1.4 1.1.6 1.4-.4 1.1 1.9-1 1v1.2l1 1-1.1 1.9-1.4-.4-1.1.6-.4 1.4H4.9l-.4-1.4-1.1-.6-1.4.4L.9 7.6l1-1V5.4l-1-1L2 2.5l1.4.4 1.1-.6z" stroke="#2b2f36" stroke-width="1.0" stroke-linecap="round" stroke-linejoin="round"/><circle cx="6" cy="6" r="1.7" stroke="#2b2f36" stroke-width="1.0" stroke-linecap="round" stroke-linejoin="round"/></svg>
<svg class="r" style="left:1816.5px;top:736.5px;" width="11" height="11" viewBox="0 0 11 11" fill="none"><path d="M5.5 0.7v9.6M0.7 5.5h9.6" stroke="#4d525b" stroke-width="1.1" stroke-linecap="round" stroke-linejoin="round"/></svg>
<div class="r" style="left:1568px;top:764px;width:235px;height:28px;background:#eff0f5;border-radius:6px;"></div>
<span class="t" style="left:1580px;top:769.0px;font-size:12px;line-height:20px;height:20px;color:#1f2329;">按钮 1</span>
<div class="r" style="left:1817px;top:777px;width:10px;height:1.25px;background:#5d626c;"></div>
<div class="r" style="left:1552px;top:804px;width:299px;height:1px;background:#dcdee3;"></div>
<div class="r" style="left:1552px;top:37px;width:299px;height:72px;background:#fcfcfe;"></div>
<div class="r" style="left:1552px;top:109px;width:299px;height:1px;background:#dcdee3;"></div>
<span class="t" style="left:1568px;top:45.5px;font-size:12px;line-height:20px;height:20px;color:#8f959e;">导航</span>
<svg class="r" style="left:1602px;top:50.5px;" width="6" height="9" viewBox="0 0 6 9" fill="none"><path d="M1.2 1l3.6 3.5L1.2 8" stroke="#8f959e" stroke-width="1.2" stroke-linecap="round" stroke-linejoin="round"/></svg>
<span class="t" style="left:1620px;top:45.5px;font-size:12px;line-height:20px;height:20px;color:#8f959e;">导航页</span>
<svg class="r" style="left:1666.5px;top:50.5px;" width="6" height="9" viewBox="0 0 6 9" fill="none"><path d="M1.2 1l3.6 3.5L1.2 8" stroke="#8f959e" stroke-width="1.2" stroke-linecap="round" stroke-linejoin="round"/></svg>
<span class="t" style="left:1684px;top:45.5px;font-size:12px;line-height:20px;height:20px;color:#1f2329;font-weight:500;">数据表格</span>
<svg class="r" style="left:1738.5px;top:49px;" width="11" height="11" viewBox="0 0 11 11" fill="none"><path d="M2 7.2L7.6 1.4l1.8 1.8L3.8 9H2z" stroke="#1f2329" stroke-width="1.1" stroke-linecap="round" stroke-linejoin="round"/><path d="M1 10.3h9.4" stroke="#1f2329" stroke-width="1.1" stroke-linecap="round" stroke-linejoin="round"/></svg>
<span class="t" style="left:1568px;top:82.0px;font-size:12px;line-height:20px;height:20px;color:#285cf6;">属性</span>
<span class="t" style="left:1620px;top:82.0px;font-size:12px;line-height:20px;height:20px;color:#1f2329;">样式</span>
<span class="t" style="left:1672px;top:82.0px;font-size:12px;line-height:20px;height:20px;color:#1f2329;">事件</span>
<div class="r" style="left:1568px;top:106px;width:24px;height:3.5px;background:#285cf6;border-radius:2px 2px 0 0;"></div>
</aside>
<svg class="r" style="left:1676px;top:543px;" width="12" height="19" viewBox="0 0 12 19" fill="none"><path d="M1.2 1.2v13.2l3.1-2.9 2.2 5.2 2-.9-2.2-5h4.2z" fill="#111" stroke="#fff" stroke-width="1" stroke-linejoin="round"/></svg>
<div class="r" style="left:1851px;top:0px;width:1px;height:810px;background:#0b0d1a;"></div>
<svg class="r" style="left:1840px;top:798px;" width="12" height="12" viewBox="0 0 12 12" fill="none"><path d="M12 0v12H0A12 12 0 0 0 12 0z" fill="#0f1530"/></svg>
</body></html>
